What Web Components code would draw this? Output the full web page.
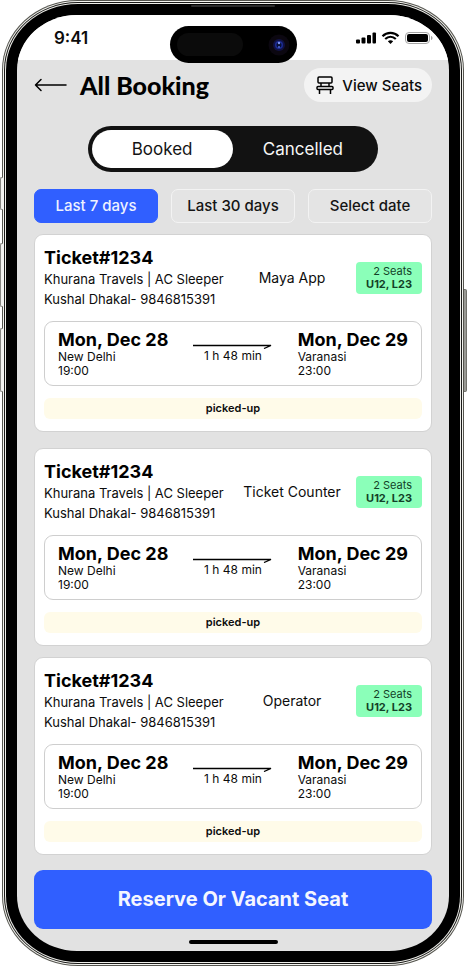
<!DOCTYPE html>
<html lang="en">
<head>
<meta charset="utf-8">
<meta name="viewport" content="width=device-width, initial-scale=1">
<title>All Booking</title>
<style>
body { margin: 0; background: #fff; color: #0c0c0c; font-family: Inter, "Open Sans", sans-serif; }
</style>
</head>
<body>
<phone-frame>
  <status-bar slot="status"></status-bar>
  <page-header heading="All Booking">View Seats</page-header>
  <segment-switch></segment-switch>
  <date-filters></date-filters>
  <ticket-card channel="Maya App"></ticket-card>
  <ticket-card channel="Ticket Counter"></ticket-card>
  <ticket-card channel="Operator" class="last"></ticket-card>
  <primary-button>Reserve Or Vacant Seat</primary-button>
</phone-frame>

<script>
function define(name, html) {
  const template = document.createElement('template');
  template.innerHTML = html;
  customElements.define(name, class extends HTMLElement {
    connectedCallback() {
      if (this.shadowRoot) return;
      const root = this.attachShadow({ mode: 'open' });
      root.append(template.content.cloneNode(true));
      root.querySelectorAll('[data-attr]').forEach(node => {
        node.textContent = this.getAttribute(node.dataset.attr) || '';
      });
    }
  });
}

define('phone-frame', `
<style>
:host { display: block; position: relative; padding: 0 3px 0 2px; }
* { box-sizing: border-box; }
.rim { background: #55554f; padding: 1px; border-radius: 76px / 70px; }
.light { background: #f4f4f0; padding: 1px; border-radius: 75px / 69px; }
.line { background: #1a1a18; padding: 1px; border-radius: 74px / 68px; }
.light2 { background: #eeeeea; padding: 1px; border-radius: 73px / 67px; }
.bezel { position: relative; background: #000; padding: 11px; border-radius: 72px / 66px; }
.screen { background: #e2e2e2; border-radius: 60px / 55px; overflow: hidden; min-height: calc(100vh - 30px); display: flex; flex-direction: column; }
.content { padding: 8px 17px 0; display: flex; flex-direction: column; }
.home { width: 89px; height: 4px; border-radius: 2px; background: #000; margin: 11px auto 7px; }
.island { position: absolute; top: 22px; left: 50%; width: 127px; height: 37px; margin-left: -63px; border-radius: 19px; background: #000; display: flex; align-items: center; justify-content: space-between; padding: 0 7px; }
.sensor { width: 66px; height: 23px; border-radius: 12px; background: #0b0b0b; }
.key { position: absolute; left: 0; width: 3px; background: #f1f1ef; border: 1px solid #888883; border-right: 0; border-radius: 2px 0 0 2px; }
.k1 { top: 177px; height: 33px; } .k2 { top: 243px; height: 64px; } .k3 { top: 328px; height: 64px; }
.power { left: auto; right: 0; top: 289px; height: 103px; background: #999994; border: 1px solid #73736e; border-left: 0; border-radius: 0 2px 2px 0; }
.speaker { position: absolute; top: 1px; left: 50%; width: 84px; height: 2px; margin-left: -42px; border-radius: 1px; background: #2b2b2b; }
</style>
<div class="key k1"></div><div class="key k2"></div><div class="key k3"></div><div class="key power"></div>
<div class="rim"><div class="light"><div class="line"><div class="light2"><div class="bezel">
  <div class="speaker"></div>
  <div class="screen">
    <slot name="status"></slot>
    <main class="content"><slot></slot></main>
    <div class="home"></div>
  </div>
  <div class="island"><div class="sensor"></div>
    <svg width="22" height="22" viewBox="0 0 22 22" aria-hidden="true"><circle cx="11" cy="11" r="10.500" fill="#0b0710"/><circle cx="11" cy="11" r="6" fill="#111243"/><circle cx="11" cy="11" r="4" fill="#1c2c94"/><circle cx="11" cy="11" r="2.500" fill="#081035"/><circle cx="11" cy="9" r="1.200" fill="#7d94ee"/><circle cx="11" cy="13" r="1" fill="#5068d8"/></svg>
  </div>
</div></div></div></div></div>`);

define('status-bar', `
<style>
:host { display: flex; justify-content: space-between; align-items: center; background: #fff; height: 45px; padding: 0 14px 0 37px; box-sizing: border-box; }
time { font-size: 17px; font-weight: 600; line-height: 20px; }
svg { display: block; }
</style>
<time>9:41</time>
<svg width="80" height="14" viewBox="0 0 80 14" aria-hidden="true">
  <g fill="#000"><rect x="1" y="8.500" width="4" height="4" rx="1"/><rect x="6.500" y="6.500" width="4" height="6" rx="1"/><rect x="12" y="4" width="4" height="8.500" rx="1"/><rect x="17.500" y="1.500" width="3.500" height="11" rx="1"/></g>
  <g fill="none" stroke="#000" stroke-width="2.200"><path d="M27.500 5.300C32 .8 39 .8 43.500 5.300"/><path d="M30.200 8C33.400 5 37.600 5 40.800 8"/></g>
  <path d="M32.800 10.200C34.500 8.800 36.500 8.800 38.200 10.200L35.500 12.900Z" fill="#000"/>
  <rect x="50.500" y="1.500" width="24" height="11" rx="3.500" fill="none" stroke="#a5a5a5"/>
  <rect x="52" y="3" width="21" height="8" rx="2" fill="#000"/>
  <path d="M76 5C78 5.500 78 8.500 76 9Z" fill="#a5a5a5"/>
</svg>`);

define('page-header', `
<style>
:host { display: flex; align-items: center; }
button { font: inherit; color: inherit; border: 0; padding: 0; background: none; display: flex; align-items: center; }
svg { display: block; fill: none; stroke: #000; }
h1 { margin: 0 0 0 12px; font-family: Lato, sans-serif; font-size: 25px; line-height: 26px; font-weight: 900; color: #000; flex: 1; }
.seats { background: #f3f3f3; border-radius: 17px; height: 34px; padding: 0 10px 0 12px; gap: 8px; font-size: 15px; font-weight: 500; }
</style>
<button type="button" aria-label="Back"><svg width="34" height="14" viewBox="0 0 34 14" stroke-width="1.500" stroke-linecap="round" stroke-linejoin="round"><path d="M7 1.500L1.500 7L7 12.500M1.500 7H32"/></svg></button>
<h1 data-attr="heading"></h1>
<button type="button" class="seats"><svg width="18" height="18" viewBox="0 0 18 18" stroke-width="1.500" stroke-linejoin="round" aria-hidden="true"><rect x="2" y="1" width="14" height="6" rx="1"/><path d="M5 7V11M13 7V11M3.500 13V18M14.500 13V18"/><rect x="1" y="10.500" width="16" height="3" rx="1"/></svg><span><slot></slot></span></button>`);

define('segment-switch', `
<style>
:host { display: flex; align-self: center; width: 73%; height: 46px; box-sizing: border-box; margin-top: 24px; padding: 4px 5px 4px 4px; background: #121212; border-radius: 23px; }
button { flex: 1; border: 0; border-radius: 20px; background: none; color: #f7f7f7; font: 400 17px/24px Inter, sans-serif; padding: 0; }
.on { background: #fff; color: #141414; }
</style>
<button type="button" class="on" aria-pressed="true">Booked</button>
<button type="button" aria-pressed="false">Cancelled</button>`);

define('date-filters', `
<style>
:host { display: flex; gap: 13px; margin-top: 17px; }
button { flex: 1; height: 34px; padding: 0; border: 1px solid #f3f3f3; border-radius: 7px; background: #e4e4e4; color: #141414; font: 500 15px/20px Inter, sans-serif; white-space: nowrap; }
.on { background: #305fff; border-color: #305fff; color: #eef2ff; }
</style>
<button type="button" class="on" aria-pressed="true">Last 7 days</button>
<button type="button" aria-pressed="false">Last 30 days</button>
<button type="button" aria-pressed="false">Select date</button>`);

define('ticket-card', `
<style>
:host { display: block; box-sizing: border-box; margin-top: 16px; padding: 12px 9px; background: #fff; border: 1px solid #d2d2d2; border-radius: 9px; }
:host(:first-of-type) { margin-top: 11px; }
:host(.last) { margin-top: 11px; }
.top { display: grid; grid-template-columns: 184px 1fr auto; align-items: center; }
h2 { margin: 0; font-size: 18px; line-height: 22px; font-weight: 700; color: #000; }
p { margin: 0; }
.who { font-size: 13px; line-height: 20px; white-space: nowrap; }
.via { font-size: 14px; line-height: 20px; text-align: center; }
.badge { background: #8bffb9; border-radius: 4px; padding: 3px 10px; font-size: 11px; line-height: 13px; color: #133f28; text-align: right; }
.badge b { font-weight: 700; }
.route { display: flex; justify-content: space-between; align-items: flex-start; margin-top: 12px; padding: 8px 13px 7px; border: 1px solid #cecece; border-radius: 9px; }
.day { font-size: 18px; line-height: 20px; font-weight: 700; color: #000; }
.sub { font-size: 12px; line-height: 14px; }
.trip { display: flex; flex-direction: column; align-items: center; padding-top: 13px; }
svg { display: block; }
.state { margin-top: 12px; border-radius: 6px; background: #fffbe9; text-align: center; font-size: 11px; line-height: 21px; font-weight: 600; }
</style>
<div class="top">
  <div><h2>Ticket#1234</h2><p class="who">Khurana Travels | AC Sleeper</p><p class="who">Kushal Dhakal- 9846815391</p></div>
  <div class="via" data-attr="channel"></div>
  <div class="badge">2 Seats<br><b>U12, L23</b></div>
</div>
<div class="route">
  <div><div class="day">Mon, Dec 28</div><div class="sub">New Delhi</div><div class="sub">19:00</div></div>
  <div class="trip"><svg width="80" height="6" viewBox="0 0 80 6" fill="none" stroke="#000" stroke-width="1.300" aria-hidden="true"><path d="M0 2.500H78L71 5.500"/></svg><div class="sub">1 h 48 min</div></div>
  <div><div class="day">Mon, Dec 29</div><div class="sub">Varanasi</div><div class="sub">23:00</div></div>
</div>
<div class="state">picked-up</div>`);

define('primary-button', `
<style>
:host { display: block; margin-top: 15px; }
button { display: block; width: 100%; padding: 16px 8px; border: 0; border-radius: 9px; background: #305fff; color: #f4f6ff; font: 700 20px/27px Inter, sans-serif; }
</style>
<button type="button"><slot></slot></button>`);
</script>
</body>
</html>
